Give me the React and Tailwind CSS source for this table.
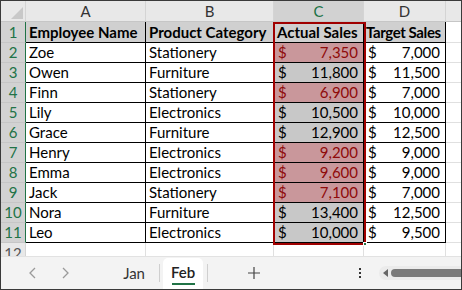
import React from "react";

const rows = [
  ["Zoe", "Stationery", "7,350", "7,000", true],
  ["Owen", "Furniture", "11,800", "11,500", false],
  ["Finn", "Stationery", "6,900", "7,000", true],
  ["Lily", "Electronics", "10,500", "10,000", false],
  ["Grace", "Furniture", "12,900", "12,500", false],
  ["Henry", "Electronics", "9,200", "9,000", true],
  ["Emma", "Electronics", "9,600", "9,000", true],
  ["Jack", "Stationery", "7,100", "7,000", true],
  ["Nora", "Furniture", "13,400", "12,500", false],
  ["Leo", "Electronics", "10,000", "9,500", false],
];

const font = { fontFamily: "Lato, 'Liberation Sans', sans-serif" };

function ColHead({ label, w, active }) {
  return (
    <div
      className={`${w} h-[20px] flex items-center justify-center border-r border-[#d4d4d4] text-[15px] ${
        active ? "bg-[#d2d2d2] text-[#217346]" : "bg-[#e8e8e8] text-[#333]"
      }`}
    >
      {label}
    </div>
  );
}

function RowHead({ n, active }) {
  return (
    <div
      className={`w-[25px] flex items-center justify-center border-r text-[15px] ${
        active
          ? "bg-[#d2d2d2] text-[#217346] border-[#217346] border-b border-b-[#c6c6c6]"
          : "bg-[#e8e8e8] text-[#555] border-[#d4d4d4]"
      }`}
    >
      {n}
    </div>
  );
}

function Money({ v, w, style, tone }) {
  return (
    <div className={`${w} flex items-center justify-between pl-[4px] pr-[5px] border-r border-b border-black ${style}`}>
      <span className={tone}>$</span>
      <span className={tone}>{v}</span>
    </div>
  );
}

export default function App() {
  return (
    <div className="w-[462px] h-[290px] overflow-hidden bg-white border border-[#3a3a3a] relative text-black" style={font}>
      {/* column headers */}
      <div className="flex h-[21px] border-b border-[#c6c6c6]">
        <div className="w-[25px] bg-[#e8e8e8] border-r border-[#d4d4d4] relative">
          <div className="absolute right-[2px] bottom-[2px] w-0 h-0 border-l-[12px] border-l-transparent border-b-[12px] border-b-[#c8c8c8]" />
        </div>
        <ColHead label="A" w="w-[120px]" />
        <ColHead label="B" w="w-[128px]" />
        <ColHead label="C" w="w-[90px]" active />
        <ColHead label="D" w="w-[82px]" />
        <div className="flex-1 bg-[#e8e8e8]" />
      </div>

      {/* header row */}
      <div className="flex h-[21px] text-[15px]">
        <RowHead n={1} active />
        <div className="w-[120px] bg-[#d0d0d0] border-r border-b border-black font-bold pl-[3px] flex items-center whitespace-nowrap">Employee Name</div>
        <div className="w-[128px] bg-[#d0d0d0] border-r border-b border-black font-bold pl-[3px] flex items-center whitespace-nowrap">Product Category</div>
        <div className="w-[90px] bg-[#d0d0d0] border-r border-b border-black font-bold pl-[3px] flex items-center whitespace-nowrap">Actual Sales</div>
        <div className="w-[82px] bg-[#d0d0d0] border-r border-b border-black font-bold pl-[2px] flex items-center whitespace-nowrap tracking-[-0.4px]">Target Sales</div>
        <div className="flex-1 border-b border-[#e0e0e0]" />
      </div>

      {rows.map(([name, cat, actual, target, low], i) => (
        <div key={name} className="flex h-[20px] text-[15px]">
          <RowHead n={i + 2} active />
          <div className="w-[120px] border-r border-b border-black pl-[3px] flex items-center">{name}</div>
          <div className="w-[128px] border-r border-b border-black pl-[3px] flex items-center">{cat}</div>
          <Money
            v={actual}
            w="w-[90px]"
            style={low ? "bg-[#c9979b]" : "bg-[#c8c8c8]"}
            tone={low ? "text-[#8f0a0a]" : "text-black"}
          />
          <Money v={target} w="w-[82px]" style="" tone="text-black" />
          <div className="flex-1 border-b border-[#e0e0e0]" />
        </div>
      ))}

      {/* row 12 */}
      <div className="flex h-[13px] text-[15px] overflow-hidden">
        <div className="w-[25px] bg-[#e8e8e8] border-r border-[#d4d4d4] text-[#555] flex justify-center leading-[20px]">12</div>
        <div className="w-[120px] border-r border-[#e0e0e0]" />
        <div className="w-[128px] border-r border-[#e0e0e0]" />
        <div className="w-[90px] border-r border-[#e0e0e0]" />
        <div className="w-[82px] border-r border-[#e0e0e0]" />
        <div className="flex-1" />
      </div>

      {/* sheet tabs */}
      <div className="flex items-stretch h-[33px] bg-[#f3f3f3] border-t border-[#e2e2e2] text-[15px]">
        <div className="w-[100px] flex items-center gap-[22px] pl-[27px] text-[#9a9a9a]">
          <svg width="10" height="14" viewBox="0 0 10 14"><path d="M7 2 L2 7 L7 12" fill="none" stroke="currentColor" strokeWidth="1.3" /></svg>
          <svg width="10" height="14" viewBox="0 0 10 14"><path d="M3 2 L8 7 L3 12" fill="none" stroke="currentColor" strokeWidth="1.3" /></svg>
        </div>
        <div className="w-[58px] flex items-center justify-end pr-[14px] text-[#333]">Jan</div>
        <div className="w-px bg-[#cfcfcf] my-[7px]" />
        <div className="ml-[3px] w-[40px] bg-white rounded-t-[5px] flex flex-col items-center justify-center font-semibold text-[#222] mt-[1px]">
          <span className="leading-[18px]">Feb</span>
          <div className="w-[23px] h-[2px] bg-[#217346] mt-[2px]" />
        </div>
        <div className="ml-[4px] w-px bg-[#cfcfcf] my-[7px]" />
        <div className="w-[92px] flex items-center justify-center text-[#444]">
          <svg width="14" height="14" viewBox="0 0 14 14"><path d="M7 1 V13 M1 7 H13" stroke="currentColor" strokeWidth="1.2" /></svg>
        </div>
        <div className="w-[51px]" />
        <div className="w-[18px] flex flex-col items-center justify-center gap-[2px]">
          <div className="w-[2px] h-[2px] bg-[#333]" />
          <div className="w-[2px] h-[2px] bg-[#333]" />
          <div className="w-[2px] h-[2px] bg-[#333]" />
        </div>
        <div className="flex-1 flex items-center pl-[10px]">
          <div className="flex-1 h-[14px] bg-[#ebebeb] rounded-l-full flex items-center pl-[4px]">
            <div className="w-0 h-0 border-t-[4px] border-t-transparent border-b-[4px] border-b-transparent border-r-[5px] border-r-[#666]" />
            <div className="ml-[3px] flex-1 h-[8px] bg-[#7a7a7a] rounded-l-full" />
          </div>
        </div>
      </div>

      {/* selection border around C1:C11 */}
      <div className="absolute left-[272px] top-[21px] w-[93px] h-[223px] border-2 border-[#a00000] pointer-events-none" />
      <div className="absolute left-[362px] top-[241px] w-[4px] h-[4px] bg-[#217346] border border-white" />
    </div>
  );
}
